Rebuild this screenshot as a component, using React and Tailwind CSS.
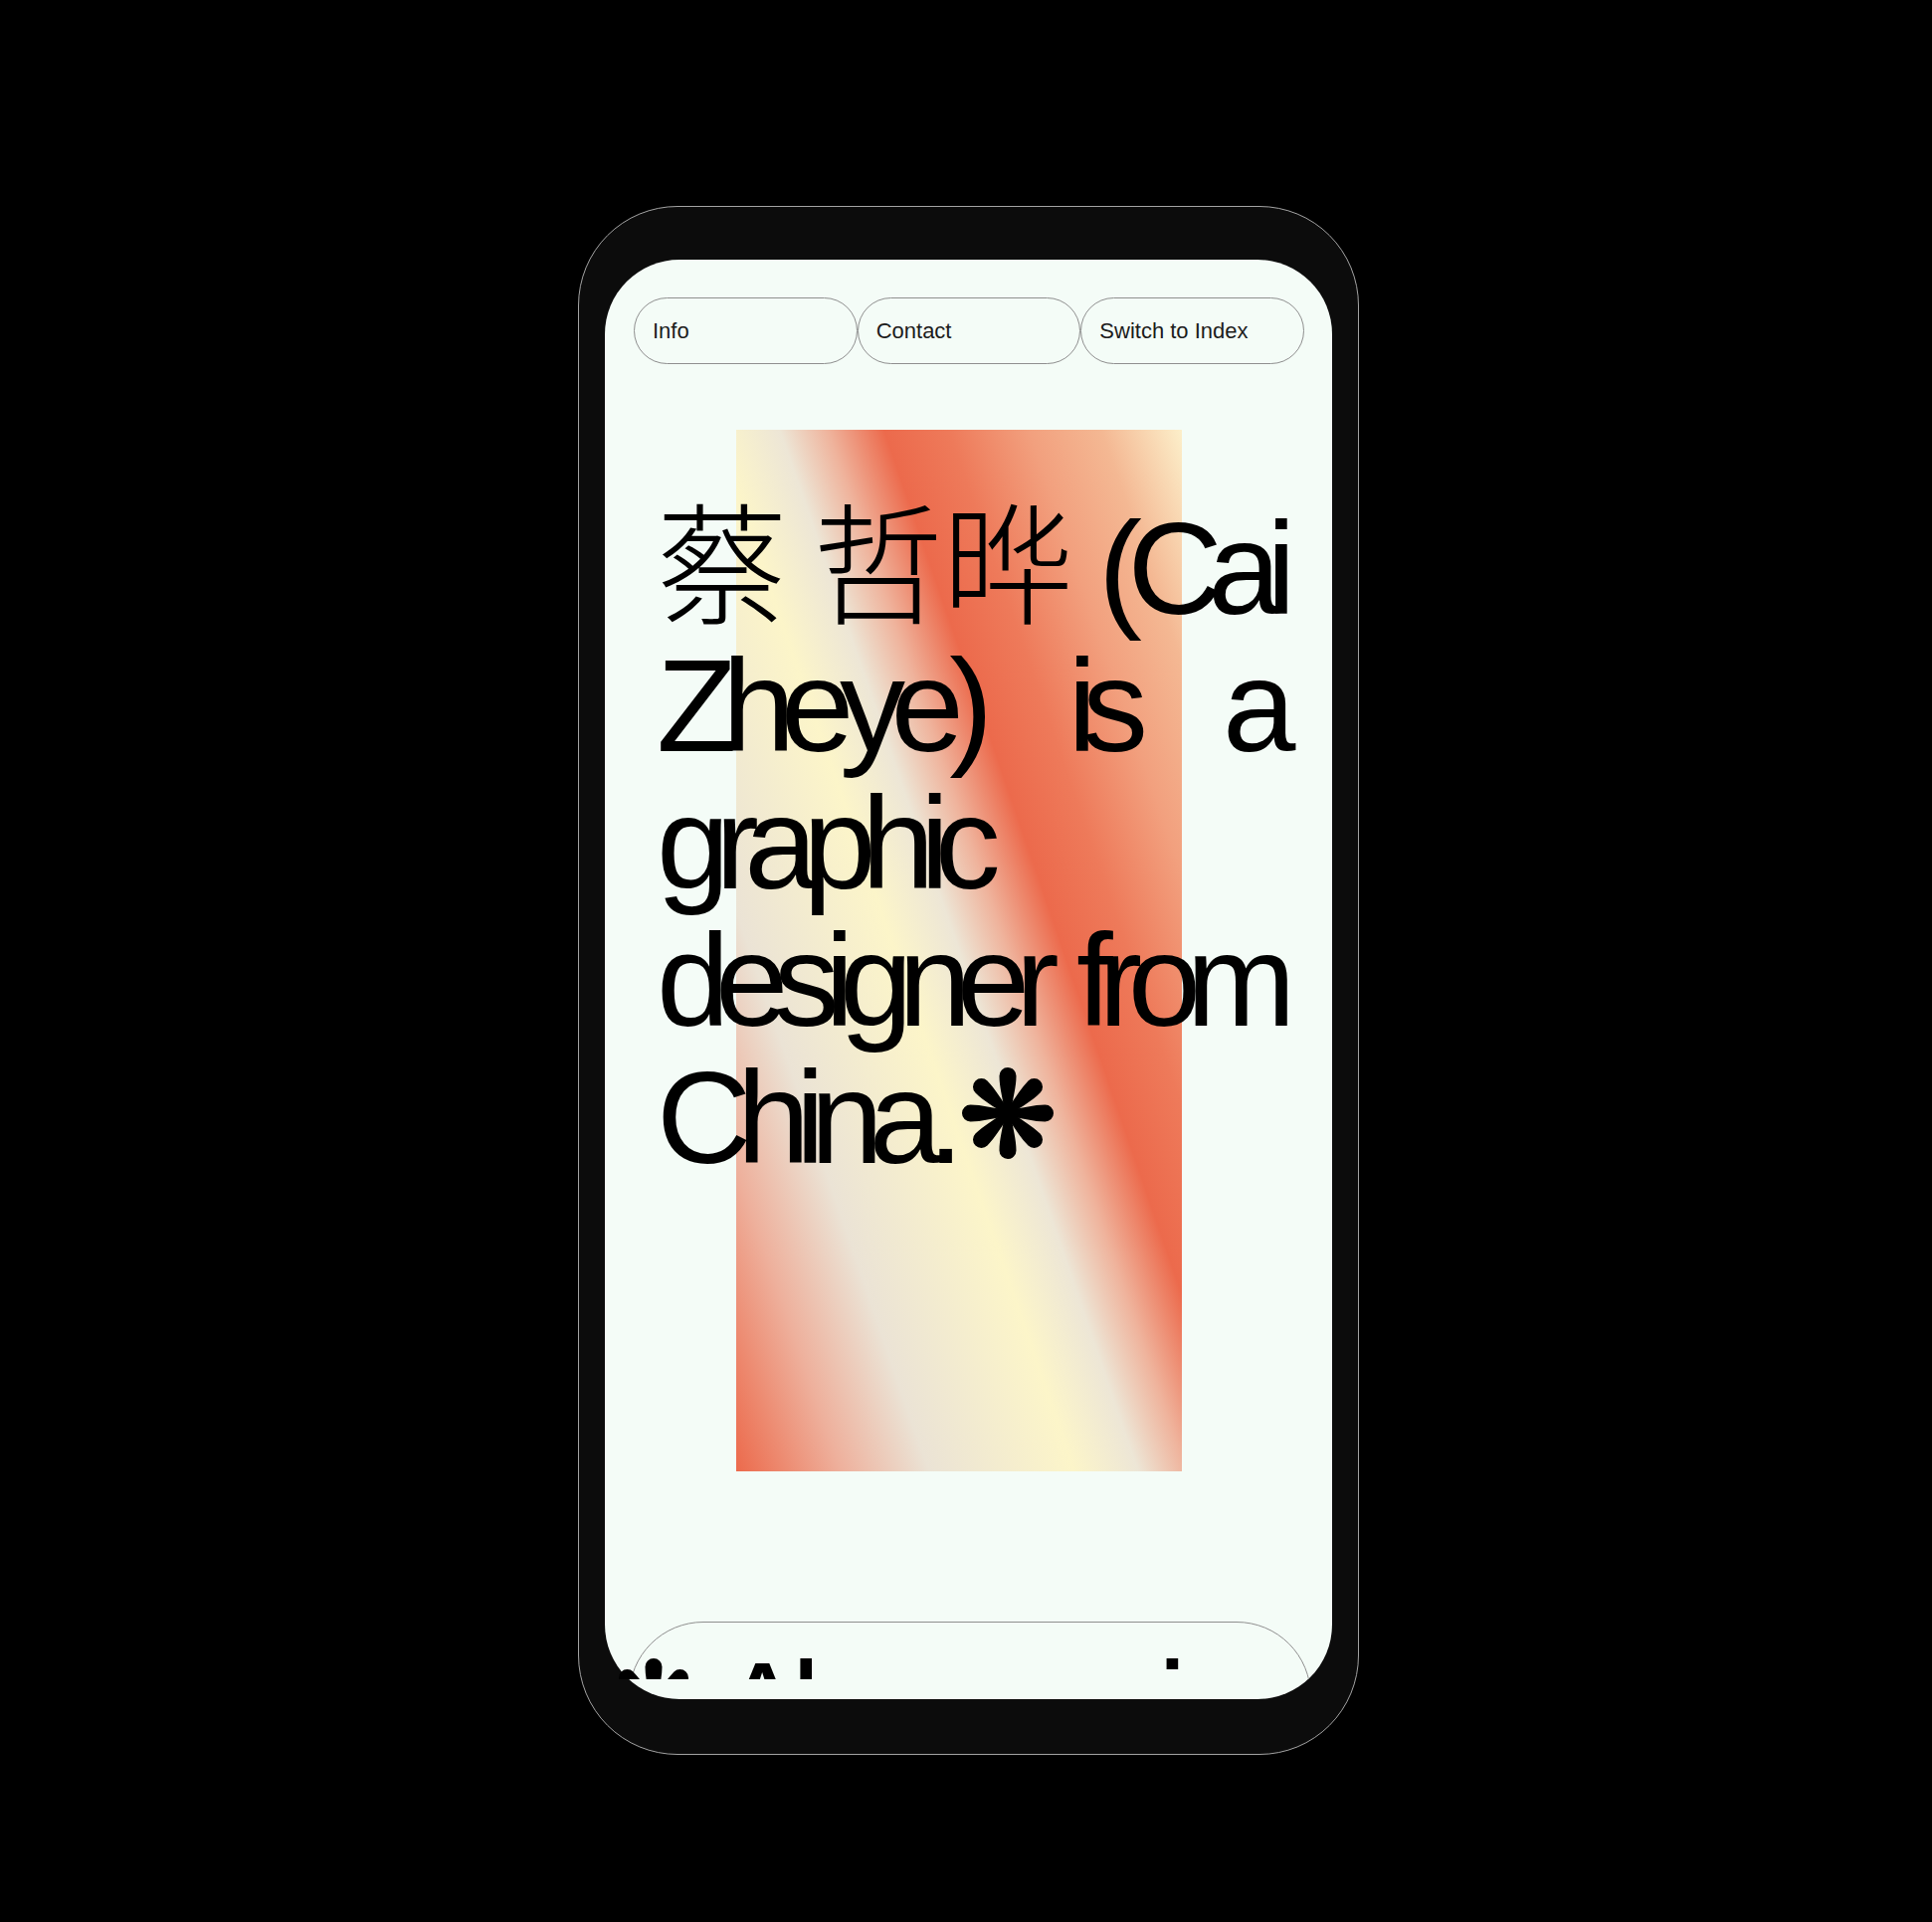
import React from "react";

// eight teardrop petals, like the glyph after "China."
const Asterisk = ({ className }) => (
  <svg viewBox="0 0 100 100" className={className} aria-hidden="true">
    {[0, 45, 90, 135, 180, 225, 270, 315].map((deg) => (
      <path
        key={deg}
        d="M46.5 47 C45 35 41.5 24 41.5 12.5 A8.5 8.5 0 0 1 58.5 12.5 C58.5 24 55 35 53.5 47 Z"
        transform={`rotate(${deg} 50 50)`}
        fill="#000"
      />
    ))}
    <circle cx="50" cy="50" r="7" fill="#000" />
  </svg>
);

const navItems = ["Info", "Contact", "Switch to Index"];

export default function App() {
  return (
    <div className="min-h-screen w-full bg-black pl-[581px] pt-[207px] pb-[168px]">
      {/* phone frame */}
      <div className="w-[785px] h-[1557px] rounded-[100px] border border-[#a3a3a3] bg-[#0c0c0c] pt-[53px] px-[26px]">
        {/* screen */}
        <div className="h-[1447px] rounded-[75px] bg-[#f4fcf7]">
          <div className="h-[1427px] overflow-hidden">
            {/* top nav */}
            <nav className="pt-[38px] pl-[29px]">
              <div className="grid grid-cols-3 w-[674px]">
                {navItems.map((item) => (
                  <button
                    key={item}
                    className="h-[67px] rounded-full border border-[#8f8f8f] flex items-center pl-[18px] text-left text-[22px] text-[#1c1c1c] font-['Liberation_Sans',sans-serif]"
                  >
                    {item}
                  </button>
                ))}
              </div>
            </nav>

            {/* hero: gradient with statement on top */}
            <section className="mt-[66px] grid">
              <div className="[grid-area:1/1] ml-[132px] w-[448px] h-[1047px] bg-[linear-gradient(71deg,#ec6a4c_0%,#ed8a70_6%,#eeb09c_13%,#ebe3d5_24%,#fcf5c9_42%,#ede6d6_50%,#efb39c_56%,#ec6a4c_63%,#ee7a5a_71%,#f2a07e_81%,#f4b893_90%,#fcefca_100%)]" />
              <h1 className="[grid-area:1/1] ml-[52px] mt-[71px] w-[628px] text-justify text-[132px] leading-[138px] tracking-[-0.11em] font-normal text-black font-['Liberation_Sans','Noto_Sans_CJK_SC',sans-serif]">
                <span className="inline-block tracking-[-0.01em] font-light">蔡</span>{" "}
                <span className="inline-block tracking-[-0.01em] font-light">哲晔</span> (Cai Zheye) is a graphic designer from China.
                <Asterisk className="inline-block align-baseline w-[102px] h-[100px] ml-[8px]" />
              </h1>
            </section>

            {/* bottom pill, cut off by the screen */}
            <div className="mt-[151px] ml-[24px] w-[686px] h-[150px] rounded-full border border-[#8f8f8f] pt-[18px]">
              <p className="-ml-[26px] whitespace-nowrap text-[132px] leading-[138px] tracking-[-0.11em] text-black font-['Liberation_Sans',sans-serif]">
                <Asterisk className="inline-block align-baseline w-[100px] h-[100px] mr-[15px]" />
                Also a curious mind
              </p>
            </div>
          </div>
        </div>
      </div>
    </div>
  );
}
